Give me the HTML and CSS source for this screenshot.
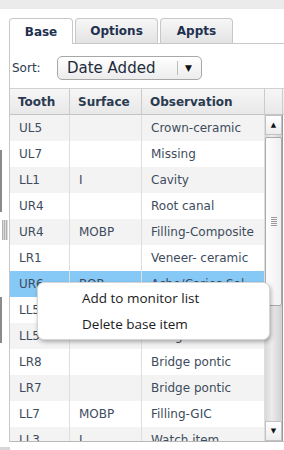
FILE: index.html
```html
<!DOCTYPE html>
<html lang="en">
<head>
    <meta charset="UTF-8">
    <meta name="viewport" content="width=device-width, initial-scale=1.0">
    <title>Base observations</title>
    <link rel="stylesheet" href="styles.css">
</head>
<body>
    <div class="topbar"></div>
    <div class="stage">
        <div class="side">
            <span class="side-line first"></span>
            <span class="side-grip"></span>
            <span class="side-line second"></span>
        </div>
        <div class="panel">
            <div class="tabs">
                <div class="tab active">Base</div>
                <div class="tab">Options</div>
                <div class="tab">Appts</div>
            </div>
            <div class="tab-body">
                <div class="sort-row">
                    <span class="sort-label">Sort:</span>
                    <div class="select">
                        <span class="select-text">Date Added</span>
                        <span class="select-sep"></span>
                        <span class="select-arrow">&#9660;</span>
                    </div>
                </div>
                <div class="list">
                    <div class="list-head">
                        <div class="cell c-tooth">Tooth</div>
                        <div class="cell c-surface">Surface</div>
                        <div class="cell c-obs">Observation</div>
                        <div class="cell c-fill"></div>
                    </div>
                    <div class="list-body">
                        <div id="rows" class="rows"></div>
                        <div class="vscroll">
                            <div class="sb-btn">&#9650;</div>
                            <div class="sb-track">
                                <div class="sb-thumb"><span class="grip"></span></div>
                            </div>
                            <div class="sb-btn">&#9660;</div>
                        </div>
                    </div>
                </div>
            </div>
        </div>
    </div>
    <div class="foot"><span class="foot-bit"></span></div>

    <!-- context menu over the selected row -->
    <div class="ctx-menu">
        <div class="ctx-item">Add to monitor list</div>
        <div class="ctx-item">Delete base item</div>
    </div>

    <script>
        const items = [
            ['UL5', '', 'Crown-ceramic'],
            ['UL7', '', 'Missing'],
            ['LL1', 'I', 'Cavity'],
            ['UR4', '', 'Root canal'],
            ['UR4', 'MOBP', 'Filling-Composite'],
            ['LR1', '', 'Veneer- ceramic'],
            ['UR6', 'BOP', 'Ache/Caries Sal'],
            ['LL5', '', 'Bridge abutment'],
            ['LL5', '', 'Bridge abutment'],
            ['LR8', '', 'Bridge pontic'],
            ['LR7', '', 'Bridge pontic'],
            ['LL7', 'MOBP', 'Filling-GIC'],
            ['LL3', 'I', 'Watch item']
        ];
        const selected = 6;

        const rows = document.getElementById('rows');
        items.forEach((it, i) => {
            const row = document.createElement('div');
            row.className = 'row' + (i % 2 === 0 ? ' alt' : '') + (i === selected ? ' sel' : '');
            row.innerHTML = `
                <div class="cell c-tooth">${it[0]}</div>
                <div class="cell c-surface">${it[1]}</div>
                <div class="cell c-obs">${it[2]}</div>
            `;
            rows.appendChild(row);
        });
    </script>
</body>
</html>
```

FILE: styles.css
```css
body {
    margin: 0;
    font-family: "DejaVu Sans", Verdana, sans-serif;
    background-color: #fff;
    position: relative;
    width: 284px;
    height: 450px;
    overflow: hidden;
}
.topbar {
    height: 9px;
    background-color: #ebebeb;
}
.stage {
    display: flex;
    padding-top: 9px;
}
.side {
    width: 9px;
    display: flex;
    flex-direction: column;
    padding-top: 132px;
}
.side-line {
    display: block;
    width: 2px;
    background-color: #8a8a8a;
}
.side-line.first {
    height: 62px;
}
.side-line.second {
    height: 46px;
    margin-top: 57px;
}
.side-grip {
    display: block;
    width: 6px;
    height: 20px;
    margin: 8px 0 0 2px;
    background: repeating-linear-gradient(90deg, #b0b0b0 0, #b0b0b0 1px, #dcdcdc 1px, #dcdcdc 2px);
}
.panel {
    width: 275px;
}
.tabs {
    display: flex;
    gap: 2px;
    height: 25px;
    border-bottom: 1px solid #c8c8c8;
}
.tab {
    box-sizing: border-box;
    height: 25px;
    border: 1px solid #c8c8c8;
    border-bottom: none;
    border-radius: 4px 4px 0 0;
    display: flex;
    align-items: center;
    justify-content: center;
    font-size: 12px;
    font-weight: bold;
    color: #1f3150;
    background: linear-gradient(#f7f7f7, #e3e3e3);
}
.tab:nth-child(1) { width: 64px; }
.tab:nth-child(2) { width: 83px; }
.tab:nth-child(3) { width: 73px; }
.tab.active {
    height: 26px;
    background: #fff;
    position: relative;
    z-index: 1;
}
.tab-body {
    border-left: 1px solid #c8c8c8;
}
.sort-row {
    display: flex;
    align-items: center;
    height: 44px;
    padding: 0 0 0 2px;
    box-sizing: border-box;
    padding-top: 4px;
}
.sort-label {
    font-size: 12px;
    color: #2c3a4c;
    width: 45px;
}
.select {
    box-sizing: border-box;
    width: 145px;
    height: 24px;
    border: 1px solid #a8a8a8;
    border-radius: 5px;
    background: linear-gradient(#ffffff, #ececec);
    display: flex;
    align-items: center;
}
.select-text {
    font-size: 15px;
    color: #1f2b3a;
    padding-left: 9px;
    width: 110px;
}
.select-sep {
    width: 1px;
    height: 14px;
    background-color: #bdbdbd;
}
.select-arrow {
    font-size: 9px;
    color: #111;
    margin-left: 7px;
}
.list {
    border-top: 1px solid #d0d0d0;
}
.list-head {
    display: flex;
    height: 25px;
    border-bottom: 1px solid #c4c4c4;
    background: linear-gradient(#f6f6f6, #e8e8e8);
}
.cell {
    box-sizing: border-box;
    border-right: 1px solid #d6d6d6;
    font-size: 12px;
    display: flex;
    align-items: center;
    white-space: nowrap;
    overflow: hidden;
}
.list-head .cell {
    font-weight: bold;
    color: #2a3a50;
    padding-left: 8px;
    border-right-color: #cbcbcb;
}
.c-tooth { width: 60px; }
.c-surface { width: 72px; }
.c-obs { width: 123px; }
.c-fill { width: 18px; }
.list-body {
    display: flex;
    height: 326px;
    border-bottom: 1px solid #b8b8b8;
    overflow: hidden;
}
.rows {
    width: 255px;
}
.row {
    display: flex;
    height: 26px;
    background-color: #fff;
}
.row.alt {
    background-color: #f3f3f3;
}
.row.sel {
    background-color: #86c9f7;
}
.row .cell {
    color: #3e4b5c;
    padding-left: 9px;
    border-right-color: #dedede;
}
.vscroll {
    box-sizing: border-box;
    width: 18px;
    border-right: 1px solid #9a9a9a;
    background: linear-gradient(90deg, #d8d8d8, #ececec 40%, #d0d0d0);
    display: flex;
    flex-direction: column;
}
.sb-btn {
    box-sizing: border-box;
    height: 20px;
    background: linear-gradient(#ffffff, #ececec);
    border: 1px solid #c2c2c2;
    font-size: 7px;
    color: #111;
    display: flex;
    align-items: center;
    justify-content: center;
}
.sb-track {
    flex: 1;
    padding-top: 2px;
}
.sb-thumb {
    box-sizing: border-box;
    height: 169px;
    border: 1px solid #a9a9a9;
    border-radius: 2px;
    background: linear-gradient(90deg, #fdfdfd, #f0f0f0);
    display: flex;
    align-items: center;
    justify-content: center;
}
.grip {
    width: 6px;
    height: 9px;
    background: repeating-linear-gradient(#9a9a9a 0, #9a9a9a 1px, transparent 1px, transparent 2px);
}
.foot {
    padding-top: 5px;
}
.foot-bit {
    display: block;
    width: 10px;
    height: 5px;
    background-color: #d6d6d6;
}
.ctx-menu {
    position: absolute;
    left: 37px;
    top: 282px;
    box-sizing: border-box;
    width: 233px;
    height: 58px;
    padding-top: 3px;
    background-color: #fff;
    border: 1px solid #d6d6d6;
    border-radius: 7px;
    box-shadow: 1px 2px 4px rgba(0, 0, 0, 0.3);
    font-family: "Open Sans", sans-serif;
    font-size: 13.5px;
    color: #1b1b1b;
}
.ctx-item {
    height: 26px;
    line-height: 24px;
    padding-left: 44px;
}
```
